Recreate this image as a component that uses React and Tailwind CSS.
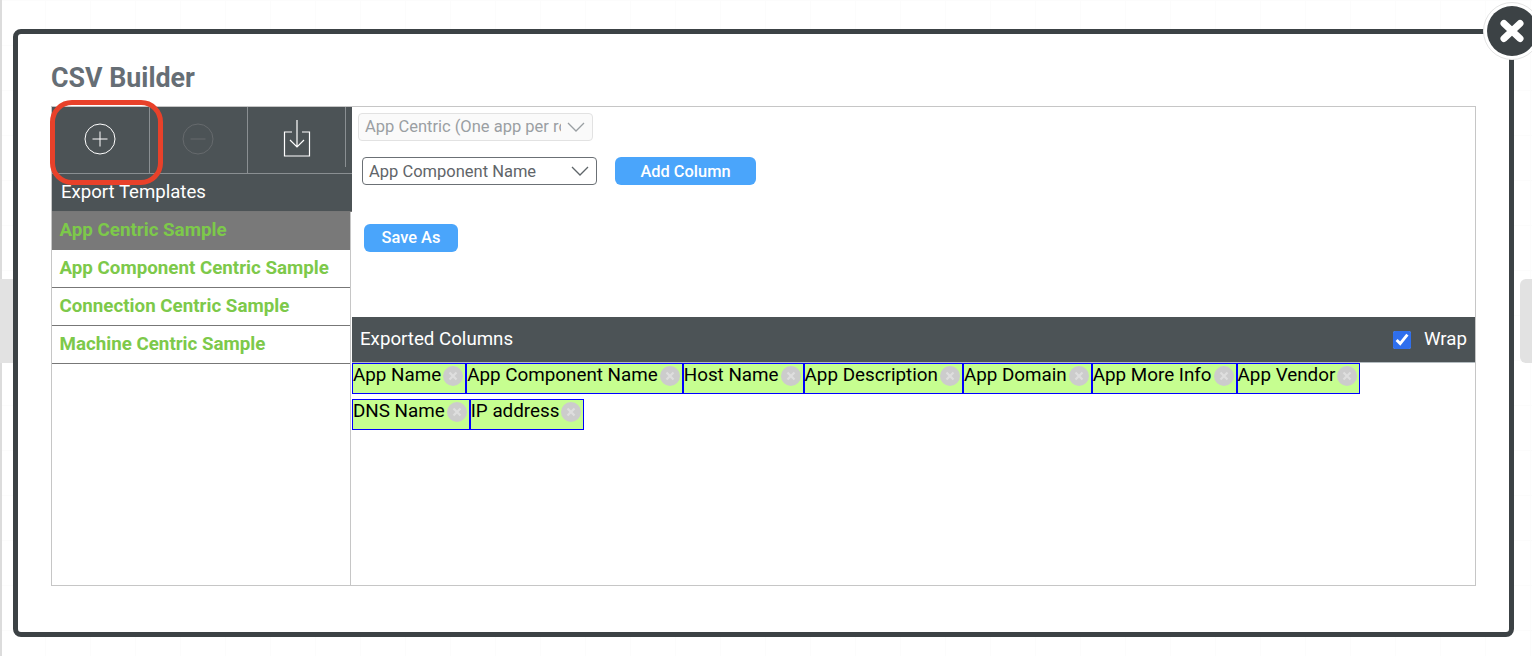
const TEMPLATES = ['App Centric Sample', 'App Component Centric Sample', 'Connection Centric Sample', 'Machine Centric Sample'];
const COLUMNS = ['App Name', 'App Component Name', 'Host Name', 'App Description', 'App Domain', 'App More Info', 'App Vendor', 'DNS Name', 'IP address'];

function Chevron() {
  return (
    <svg width="18" height="10" viewBox="0 0 18 10" fill="none">
      <path d="M1 1l8 8 8-8" stroke="currentColor" strokeWidth="1.3" />
    </svg>
  );
}

function Chip({ label }) {
  return (
    <div className="h-[31px] flex items-start border border-[#0000ff] bg-[#c6fe90] pr-[2px] text-[18.82px] leading-[22px] text-black">
      <span>{label}</span>
      <svg width="20" height="20" viewBox="0 0 20 20" className="ml-[2px] mt-[2px]">
        <circle cx="10" cy="10" r="10" fill="#cccccc" />
        <path d="M6.5 6.5l7 7M13.5 6.5l-7 7" stroke="#dedede" strokeWidth="2.2" />
      </svg>
    </div>
  );
}

function ToolButton({ children, last }) {
  return (
    <div className="w-[98px] h-[66px] flex items-center justify-center relative">
      {children}
      <span className={`absolute right-0 top-0 w-px bg-[#8a8f92] ${last ? 'h-[60px]' : 'h-[66px]'}`} />
    </div>
  );
}

export default function App() {
  return (
    <div className="relative w-[1532px] h-[656px] overflow-hidden bg-white bg-[linear-gradient(#fcfcfc_1px,transparent_1px),linear-gradient(90deg,#fcfcfc_1px,transparent_1px)] bg-[size:45px_45px] font-['Roboto',sans-serif] pl-[13px] pt-[29px]">
      {/* page edge + scroll handles behind the modal */}
      <div className="absolute left-0 top-0 w-[2px] h-full bg-[#dcdcdc]" />
      <div className="absolute left-0 top-[279px] w-[14px] h-[84px] bg-[#e2e2e2]" />
      <div className="absolute left-[1520px] top-[279px] w-[12px] h-[84px] rounded-l-md bg-[#e2e2e2]" />

      <div className="relative w-[1501px] h-[608px] border-[5px] border-[#3c4245] rounded-lg bg-white px-[33px]">
        <h2 className="pt-[30px] h-[72px] text-[26.8px] leading-[28px] font-bold text-[#666e75]">CSV Builder</h2>

        <div className="flex w-[1425px] h-[480px] border border-[#c6c6c6]">
          {/* left column */}
          <div className="w-[299px] shrink-0 border-r border-[#c6c6c6]">
            <div className="w-[300px] relative z-10 flex h-[67px] bg-[#4c5356] border-b border-[#8a8f92]">
              <ToolButton>
                <svg width="32" height="32" viewBox="0 0 32 32" fill="none" stroke="#fff" strokeWidth="1" className="-translate-x-px -translate-y-px">
                  <circle cx="16" cy="16" r="15" />
                  <path d="M16 8.5v15M8.5 16h15" />
                </svg>
              </ToolButton>
              <ToolButton>
                <svg width="32" height="32" viewBox="0 0 32 32" fill="none" stroke="#666a6d" strokeWidth="1" className="-translate-x-px -translate-y-px">
                  <circle cx="16" cy="16" r="15" />
                  <path d="M8.5 16h15" />
                </svg>
              </ToolButton>
              <ToolButton last>
                <svg width="28" height="37" viewBox="0 0 28 37" fill="none" stroke="#fff" strokeWidth="1.2" className="-translate-y-[2px]">
                  <path d="M9 12H1.5v24h25V12H19" />
                  <path d="M14 0v27M7 20l7 7 7-7" />
                </svg>
              </ToolButton>
            </div>
            <div className="w-[300px] relative z-10 h-[38px] bg-[#4c5356] pl-[9px] text-[18.6px] leading-[36px] text-white border-b border-[#777]">Export Templates</div>
            {TEMPLATES.map((t, i) => (
              <div key={t} className={`h-[38px] pl-[7.5px] text-[18.75px] leading-[36px] font-bold text-[#7dc94a] ${i === 0 ? 'bg-[#797979]' : 'border-b border-[#777]'}`}>{t}</div>
            ))}
          </div>

          {/* right column */}
          <div className="flex-1 min-w-0 pl-px">
            <div className="h-[210px] pl-[6px] pt-[6px]">
              <div className="w-[235px] h-[28px] flex items-center justify-between border border-[#e2e2e2] rounded bg-[#fafafa] pl-[6px] pr-[7px] text-[16.5px] text-[#9a9fa3]">
                <span className="w-[196px] overflow-hidden whitespace-nowrap">App Centric (One app per row)</span>
                <Chevron />
              </div>
              <div className="flex items-center mt-[16px] ml-[4px]">
                <div className="w-[235px] h-[28px] flex items-center justify-between border border-[#6b7075] rounded bg-white pl-[6px] pr-[7px] text-[16.5px] text-[#5f6569]">
                  <span className="pt-[2px]">App Component Name</span>
                  <Chevron />
                </div>
                <button className="ml-[18px] w-[141px] h-[28px] pt-[2px] rounded-md bg-[#4aa5fb] text-white text-[16.4px] font-medium">Add Column</button>
              </div>
              <button className="block ml-[6px] mt-[39px] w-[94px] h-[28px] rounded-md bg-[#4aa5fb] text-white text-[16.4px] font-medium">Save As</button>
            </div>

            <div className="h-[46px] bg-[#4c5356] border-b border-[#b4bcc0] flex items-center pl-[8px] pr-[8px] pb-px text-[18.7px] text-white">
              <span>Exported Columns</span>
              <input type="checkbox" defaultChecked className="ml-auto w-[18px] h-[18px] mt-px accent-[#2f6fed]" />
              <span className="ml-[13px]">Wrap</span>
            </div>

            <div className="flex flex-wrap gap-y-[5px]">
              {COLUMNS.map((c) => <Chip key={c} label={c} />)}
            </div>
          </div>
        </div>
      </div>

      {/* red highlight around the add button */}
      <div className="absolute left-[50px] top-[100px] w-[113px] h-[85px] border-[5px] border-[#e8412a] rounded-[22px] z-20" />

      {/* close button */}
      <div className="absolute left-[1483px] top-[2px] w-[58px] h-[58px] rounded-full bg-white border border-[#e4e4e4] flex items-center justify-center z-20">
        <div className="w-[50px] h-[50px] rounded-full bg-[#3c4245] flex items-center justify-center">
          <svg width="26" height="24" viewBox="0 0 26 24" fill="none" stroke="#fff" strokeWidth="7" strokeLinecap="round">
            <path d="M5 4.5l16 15M21 4.5l-16 15" />
          </svg>
        </div>
      </div>
    </div>
  );
}
